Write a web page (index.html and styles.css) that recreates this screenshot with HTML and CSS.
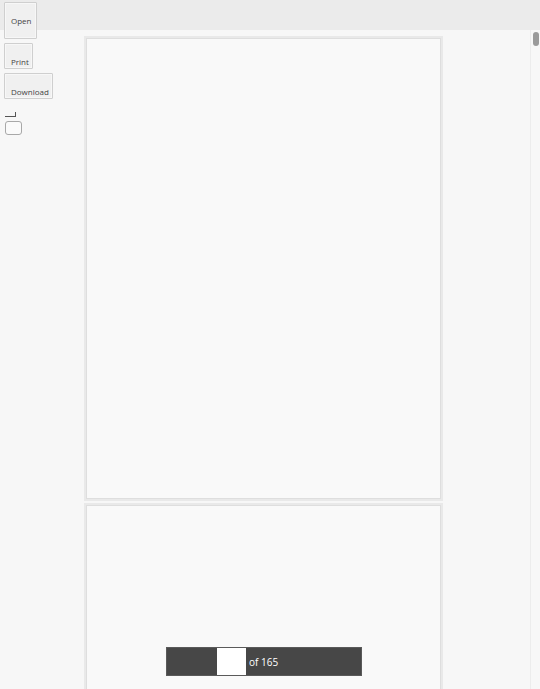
FILE: index.html
```html
<!DOCTYPE html>
<html>
<head>
<meta charset="utf-8">
<link rel="stylesheet" href="styles.css">
</head>
<body>
<div class="app">
  <div class="toolbar"></div>
  <div class="main">
    <div class="viewer">
      <div class="page page-first"></div>
      <div class="page"></div>
    </div>
    <div class="scrollbar"><div class="thumb"></div></div>
  </div>
  <div class="tools">
    <button class="btn btn-open">Open</button>
    <button class="btn btn-print">Print</button>
    <button class="btn btn-download">Download</button>
    <span class="corner"></span>
    <span class="check"></span>
  </div>
  <div class="pager">
    <input class="page-input" type="text" value="">
    <span class="page-count">of 165</span>
  </div>
</div>
</body>
</html>
```
FILE: styles.css
```css
html, body {
  margin: 0;
  padding: 0;
  width: 540px;
  height: 689px;
  overflow: hidden;
  font-family: "Open Sans", "Noto Sans", sans-serif;
  background: #f7f7f7;
}
.app {
  position: relative;
  width: 540px;
  height: 689px;
  display: flex;
  flex-direction: column;
}
.toolbar {
  height: 30px;
  flex: none;
  background: #ebebeb;
}
.main {
  flex: 1;
  display: flex;
  overflow: hidden;
}
.viewer {
  flex: 1;
  display: flex;
  flex-direction: column;
  align-items: center;
  padding-top: 8px;
  padding-right: 3px;
  gap: 6px;
  overflow: hidden;
}
.page {
  flex: none;
  box-sizing: border-box;
  width: 355px;
  height: 461px;
  background: #f9f9f9;
  border: 1px solid #dedede;
  box-shadow: 0 0 0 2px #e9e9e9;
}
.scrollbar {
  width: 10px;
  flex: none;
  border-left: 1px solid #ececec;
  padding: 2px 2px 0 1px;
  box-sizing: border-box;
}
.thumb {
  width: 6px;
  height: 14px;
  margin-left: 1px;
  border-radius: 3px;
  background: #9a9a9a;
}
.tools {
  position: absolute;
  top: 2px;
  left: 4px;
  display: flex;
  flex-direction: column;
  align-items: flex-start;
}
.btn {
  font-family: "Open Sans", "Noto Sans", sans-serif;
  font-size: 8px;
  color: #444;
  background: #f0f0f0;
  border: 1px solid #cfcfcf;
  border-radius: 1px;
  padding: 0 6px;
  margin: 0 0 4px 0;
  box-sizing: border-box;
  line-height: 10px;
  box-shadow: inset 0 0 0 1px #f7f7f7;
}
.btn-open {
  height: 37px;
  width: 33px;
  padding-top: 1px;
}
.btn-print {
  height: 26px;
  width: 29px;
  padding-top: 12px;
}
.btn-download {
  height: 26px;
  width: 49px;
  padding-top: 12px;
}
.corner {
  display: block;
  width: 11px;
  height: 5px;
  margin: 9px 0 4px 1px;
  border-right: 1px solid #555;
  border-bottom: 1px solid #555;
  box-sizing: border-box;
}
.check {
  display: block;
  width: 17px;
  height: 14px;
  margin-left: 1px;
  border: 1px solid #a8a8a8;
  border-radius: 3px;
  background: #fafafa;
  box-sizing: border-box;
}
.pager {
  position: absolute;
  left: 166px;
  bottom: 13px;
  width: 196px;
  height: 29px;
  background: #474747;
  border: 1px solid #5a5a5a;
  box-sizing: border-box;
  display: flex;
  align-items: center;
  padding-left: 50px;
  gap: 3px;
}
.page-input {
  width: 29px;
  height: 27px;
  box-sizing: border-box;
  border: none;
  margin: 0;
  padding: 0;
  background: #ffffff;
  outline: none;
}
.page-count {
  color: #ffffff;
  font-size: 10px;
}
```
